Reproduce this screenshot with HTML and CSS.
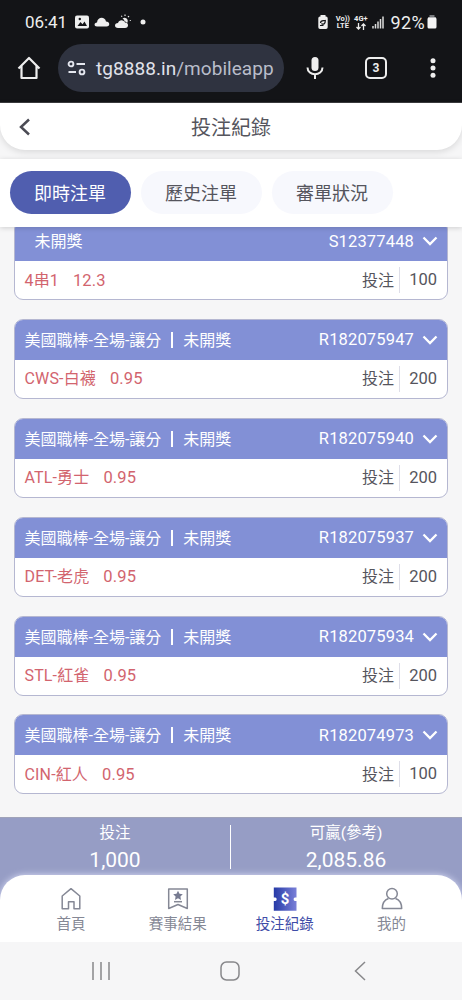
FILE: index.html
```
<!DOCTYPE html>
<html lang="zh-Hant">
<head>
<meta charset="utf-8">
<meta name="viewport" content="width=device-width, initial-scale=1">
<title>投注紀錄</title>
<link rel="stylesheet" href="styles.css">
</head>
<body>
<div class="browser">
  <div class="status">
    <span class="clock">06:41</span>
    <svg class="notices" width="74" height="16" viewBox="0 0 74 16">
      <rect x="0" y="1.500" width="14" height="13" rx="2" fill="#eee"/>
      <path d="M2.500 12l3-4 2 2.300 2-2.800 2.500 4.500z" fill="#131417"/><circle cx="4.800" cy="5" r="1.200" fill="#131417"/>
      <path d="M22 12.500c-3.200 0-3.200-4 0-4C22.600 2.500 30 2.500 31 7.500c4 0 4.500 5 .5 5z" fill="#eee"/>
      <path d="M43 14c-4 0-4-5 0-5 1-4 6-3.500 7-.5 4 0 4 5.500 0 5.500z" fill="#eee"/>
      <path d="M47.500 4.500c3-2.500 7 1.500 4.500 4.500-.8-1.300-1.500-1.500-2.500-1.500 0-1.500-1-2.500-2-3z" fill="#eee"/>
      <path d="M47 2.700l-.6-1M50 1.900V.6M53 3.200l1-1.200M54.800 6.500h1" fill="none" stroke="#eee" stroke-width="1.100"/>
      <circle cx="68" cy="8" r="2.500" fill="#eee"/>
    </svg>
    <div class="signals">
      <svg width="10" height="15" viewBox="0 0 10 15"><path d="M2.500 1.500V0h5v1.500H8q1.700 0 1.700 1.700v9Q9.700 14 8 14H2Q.3 14 .3 12.200v-9Q.3 1.500 2 1.500z" fill="#eee"/><path d="M2.500 8c0-3 3-2 4.800-2.500C7.500 9 5 10 3.500 8.500M2 10.500h3.500" fill="none" stroke="#131417" stroke-width="1.200"/></svg>
      <span class="tiny volte">Vo))<br>LTE</span>
      <span class="tiny net">4G+<svg width="10" height="7" viewBox="0 0 10 7"><path d="M2.500 0v6M.5 4l2 2 2-2M7.500 7V1M5.500 3l2-2 2 2" fill="none" stroke="#eee" stroke-width="1.300"/></svg></span>
      <svg class="bars" width="12" height="13" viewBox="0 0 12 13"><path d="M1 10v2.500M3.500 8v4.500M6 5.500v7M8.500 3v9.500M11 .5v12" stroke="#ddd" stroke-width="1.500"/></svg>
      <span class="percent">92%</span>
      <svg width="10" height="14" viewBox="0 0 10 14"><path d="M2.500 0h5v2h1.500v2H1V2h1.500z" fill="#77797d"/><rect x=".5" y="2.500" width="9" height="11" rx="1.500" fill="#f4f4f4"/></svg>
    </div>
  </div>
  <div class="toolbar">
    <svg class="home" width="24" height="24" viewBox="0 0 24 24"><path d="M1.500 12.500L12 2l10.500 10.500M4.500 10v12h15V10" fill="none" stroke="#eee" stroke-width="2.200" stroke-linejoin="round"/></svg>
    <div class="address">
      <svg width="20" height="16" viewBox="0 0 20 16" fill="none" stroke="#e5e7ef" stroke-width="1.900"><circle cx="4" cy="4" r="2.400"/><path d="M9.500 4H18M1.500 12H9"/><circle cx="15" cy="12" r="2.400"/></svg>
      <span class="url">tg8888.in<span class="path">/mobileapp</span></span>
    </div>
    <svg class="mic" width="20" height="24" viewBox="0 0 20 24"><rect x="6.500" y="1" width="7" height="14" rx="3.500" fill="#eee"/><path d="M2.500 11.500c0 9 15 9 15 0M10 18v5" fill="none" stroke="#eee" stroke-width="2"/></svg>
    <div class="count">3</div>
    <svg class="more" width="6" height="20" viewBox="0 0 6 20" fill="#eee"><circle cx="3" cy="2.700" r="2.500"/><circle cx="3" cy="10" r="2.500"/><circle cx="3" cy="17.200" r="2.500"/></svg>
  </div>
</div>

<header class="header">
  <svg class="back" width="12" height="18" viewBox="0 0 12 18"><path d="M10 1.500L2 9l8 7.500" fill="none" stroke="#4b4b54" stroke-width="2.500"/></svg>
  <h1>投注紀錄</h1>
</header>

<nav class="tabs">
  <span class="tab active">即時注單</span>
  <span class="tab">歷史注單</span>
  <span class="tab">審單狀況</span>
</nav>

<main class="list">
  <section class="card parlay">
    <div class="top"><span class="state">未開獎</span><span class="id">S12377448</span><svg class="chev" viewBox="0 0 16 10"><path d="M1.500 1.500L8 8l6.500-6.500"/></svg></div>
    <div class="row"><span class="pick">4串1</span><span class="odds">12.3</span><span class="label">投注</span><span class="stake">100</span></div>
  </section>
  <section class="card">
    <div class="top"><span class="game">美國職棒-全場-讓分</span><i class="bar"></i><span class="game">未開獎</span><span class="id">R182075947</span><svg class="chev" viewBox="0 0 16 10"><path d="M1.500 1.500L8 8l6.500-6.500"/></svg></div>
    <div class="row"><span class="pick">CWS-白襪</span><span class="odds">0.95</span><span class="label">投注</span><span class="stake">200</span></div>
  </section>
  <section class="card">
    <div class="top"><span class="game">美國職棒-全場-讓分</span><i class="bar"></i><span class="game">未開獎</span><span class="id">R182075940</span><svg class="chev" viewBox="0 0 16 10"><path d="M1.500 1.500L8 8l6.500-6.500"/></svg></div>
    <div class="row"><span class="pick">ATL-勇士</span><span class="odds">0.95</span><span class="label">投注</span><span class="stake">200</span></div>
  </section>
  <section class="card">
    <div class="top"><span class="game">美國職棒-全場-讓分</span><i class="bar"></i><span class="game">未開獎</span><span class="id">R182075937</span><svg class="chev" viewBox="0 0 16 10"><path d="M1.500 1.500L8 8l6.500-6.500"/></svg></div>
    <div class="row"><span class="pick">DET-老虎</span><span class="odds">0.95</span><span class="label">投注</span><span class="stake">200</span></div>
  </section>
  <section class="card">
    <div class="top"><span class="game">美國職棒-全場-讓分</span><i class="bar"></i><span class="game">未開獎</span><span class="id">R182075934</span><svg class="chev" viewBox="0 0 16 10"><path d="M1.500 1.500L8 8l6.500-6.500"/></svg></div>
    <div class="row"><span class="pick">STL-紅雀</span><span class="odds">0.95</span><span class="label">投注</span><span class="stake">200</span></div>
  </section>
  <section class="card">
    <div class="top"><span class="game">美國職棒-全場-讓分</span><i class="bar"></i><span class="game">未開獎</span><span class="id">R182074973</span><svg class="chev" viewBox="0 0 16 10"><path d="M1.500 1.500L8 8l6.500-6.500"/></svg></div>
    <div class="row"><span class="pick">CIN-紅人</span><span class="odds">0.95</span><span class="label">投注</span><span class="stake">100</span></div>
  </section>
</main>

<div class="footer">
  <div class="totals">
    <div class="total"><span>投注</span><strong>1,000</strong></div>
    <i class="divider"></i>
    <div class="total"><span>可贏(參考)</span><strong>2,085.86</strong></div>
  </div>
  <nav class="menu">
    <div class="item">
      <svg width="24" height="24" viewBox="0 0 24 24" fill="none" stroke="#858895" stroke-width="1.500" stroke-linejoin="round"><path d="M3.200 9L12 1.700 20.800 9v12.700H15v-7H9.500v7H3.200z"/></svg>
      <span>首頁</span>
    </div>
    <div class="item">
      <svg width="24" height="24" viewBox="0 0 24 24" fill="none" stroke="#858895" stroke-width="1.500" stroke-linejoin="round"><path d="M2.700 2h18.600v19.500L12 17.500l-9.300 4z"/><path d="M8 14.700h8"/><path d="M12 3.800l1.500 3 3.300.5-2.400 2.300.6 3.300-3-1.600-3 1.600.6-3.300-2.400-2.300 3.300-.5z" fill="#777b91" stroke="none"/></svg>
      <span>賽事結果</span>
    </div>
    <div class="item current">
      <svg width="24" height="24" viewBox="0 0 24 24"><defs><linearGradient id="ticket"><stop stop-color="#263aa7"/><stop offset="1" stop-color="#7a80d8"/></linearGradient></defs><path d="M.8.500h22.700v10H22a1.800 1.800 0 0 0 0 3.500h1.500v9.800H.8V14h1.500a1.800 1.800 0 0 0 0-3.500H.8z" fill="url(#ticket)"/><text x="12" y="17" text-anchor="middle" class="dollar">$</text></svg>
      <span>投注紀錄</span>
    </div>
    <div class="item">
      <svg width="24" height="24" viewBox="0 0 24 24" fill="none" stroke="#858895" stroke-width="1.500" stroke-linejoin="round"><circle cx="12" cy="6.700" r="5.300"/><path d="M8.500 11.500C4.300 13 2.300 16.500 2.300 21.500h19.400c0-5-2-8.500-6.200-10"/></svg>
      <span>我的</span>
    </div>
  </nav>
</div>

<div class="system">
  <svg width="18" height="20" viewBox="0 0 18 20"><path d="M1 1v18M9 1v18M17 1v18"/></svg>
  <svg width="20" height="20" viewBox="0 0 20 20"><rect x="1" y="1" width="18" height="18" rx="5.500"/></svg>
  <svg class="sysback" width="12" height="20" viewBox="0 0 12 20"><path d="M11 1L1.500 10l9.500 9"/></svg>
</div>
</body>
</html>
```

FILE: styles.css
```
* { box-sizing: border-box; }
body {
  margin: 0;
  width: 462px;
  height: 1000px;
  overflow: hidden;
  display: flex;
  flex-direction: column;
  background: #f6f6f7;
  font-family: Roboto, "Noto Sans CJK TC", sans-serif;
  font-size: 16px;
  color: #55555d;
}
svg { flex: none; display: block; }

.browser { flex: none; height: 103px; background: #131417; color: #eee; border-bottom: 1px solid #3b3b3e; }
.status { height: 44px; display: flex; align-items: center; padding: 0 25px; }
.clock { font-size: 17px; width: 50px; letter-spacing: -.1px; }
.signals { margin-left: auto; display: flex; align-items: center; }
.tiny { font-size: 7.500px; font-weight: 700; line-height: 7px; text-align: center; }
.volte { margin-left: 7px; width: 15px; }
.net { margin-left: 3px; width: 15px; }
.net svg { margin: 1px auto 0; }
.bars { margin-left: 4px; }
.percent { font-size: 18px; margin: 0 2px 0 6px; letter-spacing: .4px; }

.toolbar { height: 48px; display: flex; align-items: center; padding-left: 17px; }
.address { width: 226px; height: 48px; margin-left: 17px; padding-left: 9px; border-radius: 24px; background: #2f3340; display: flex; align-items: center; gap: 9px; }
.url { font-size: 19px; color: #e0e2ea; white-space: nowrap; letter-spacing: .05px; }
.path { color: #b9bdca; }
.mic { margin-left: 21px; }
.count { width: 22px; height: 22px; margin-left: 40px; border: 2px solid #eee; border-radius: 5px; font-size: 12px; line-height: 18px; font-weight: 700; text-align: center; }
.more { margin-left: 43px; }

.header { flex: none; height: 47px; display: flex; align-items: center; padding: 0 19px; background: #fff; border-radius: 0 0 25px 25px; box-shadow: 0 2px 7px rgba(0, 0, 0, .12); }
.header h1 { flex: 1; margin: 0 12px 0 0; padding-top: 3px; font-size: 20px; line-height: 28px; font-weight: 400; text-align: center; }

.tabs { position: relative; flex: none; height: 68px; margin-top: 9px; padding: 12px 10px; display: flex; gap: 10px; background: #fff; box-shadow: 0 1px 5px rgba(0, 0, 0, .16); }
.tab { width: 121px; height: 43px; padding-right: 1px; border-radius: 22px; background: #f7f8fd; font-size: 18px; line-height: 45px; text-align: center; }
.tab.active { background: #505eaf; color: #fff; }

.list { flex: none; height: 590px; padding: 0 14px; overflow: hidden; display: flex; flex-direction: column; gap: 18.900px; }
.card { flex: none; height: 80px; border: 1px solid #b5b7d1; border-radius: 9px; overflow: hidden; background: #fff; }
.parlay { margin-top: -7px; }
.top { height: 40px; padding: 0 9px 0 9.500px; display: flex; align-items: center; background: #8290d6; color: #fff; white-space: nowrap; }
.game, .state { padding-bottom: 2px; }
.state { margin-left: 10px; }
.bar { width: 2px; height: 16px; margin: 0 10px; background: #fff; }
.id { margin-left: auto; font-size: 16.500px; letter-spacing: .15px; }
.chev { width: 16px; height: 10px; margin-left: 8px; fill: none; stroke: #fff; stroke-width: 2.300; }
.row { height: 38px; padding: 0 10px 0 9.500px; display: flex; align-items: center; }
.pick, .odds { color: #d2646e; letter-spacing: .15px; }
.pick, .label { padding-bottom: 3px; }
.odds { margin-left: 14px; font-size: 16.500px; }
.label { margin-left: auto; }
.stake { width: 38px; height: 26px; margin-left: 5px; border-left: 1px solid #dedee8; line-height: 26px; text-align: right; font-size: 16.500px; }

.footer { flex: none; height: 125px; background: #969dc5; border-top: 1px solid #a0a3b9; overflow: hidden; }
.totals { height: 57px; display: flex; align-items: center; padding-right: 1px; color: #fff; }
.total { flex: 1; display: flex; flex-direction: column; align-items: center; }
.total span { font-size: 15.500px; line-height: 26px; }
.total strong { font-size: 21px; line-height: 28px; font-weight: 400; }
.divider { width: 1px; height: 44px; background: #fff; }
.menu { height: 67px; padding: 12px 17px 0 17.500px; display: flex; background: #fff; border-radius: 25px 25px 0 0; box-shadow: 0 0 7px rgba(230, 233, 255, .85); }
.item { flex: 1; display: flex; flex-direction: column; align-items: center; gap: 2px; color: #858895; font-size: 14.500px; line-height: 24px; white-space: nowrap; }
.current { color: #3f4da8; }
.dollar { font: 700 15px Roboto, sans-serif; fill: #fff; }

.system { flex: none; height: 58px; display: flex; align-items: center; padding-left: 92px; gap: 110px; }
.system svg { fill: none; stroke: #88888b; stroke-width: 1.500; }
.sysback { margin-left: 4px; }
```
